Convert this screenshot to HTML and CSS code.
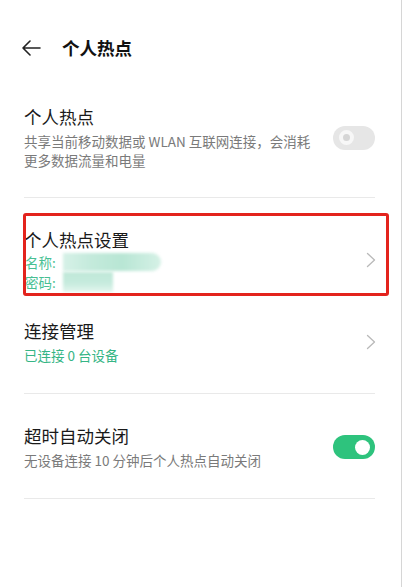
FILE: index.html
```html
<!DOCTYPE html>
<html lang="zh-CN">
<head>
<meta charset="utf-8">
<title>个人热点</title>
<link rel="stylesheet" href="styles.css">
</head>
<body>
<div class="page">
  <header class="header">
    <svg class="back" width="20" height="16" viewBox="0 0 20 16"><path d="M19 8H2M9 1L2 8l7 7" fill="none" stroke="#222" stroke-width="1.6" stroke-linecap="round" stroke-linejoin="round"/></svg>
    <h1 class="header-title">个人热点</h1>
  </header>

  <div class="item item-first">
    <div class="text">
      <div class="title">个人热点</div>
      <div class="sub sub-wrap">共享当前移动数据或 WLAN 互联网连接，会消耗更多数据流量和电量</div>
    </div>
    <div class="switch switch-off"><span class="knob"></span></div>
  </div>
  <div class="divider"></div>

  <div class="item item-settings">
    <div class="text">
      <div class="title">个人热点设置</div>
      <div class="kv">名称:<span class="mask mask-name"></span></div>
      <div class="kv">密码:<span class="mask mask-pw"></span></div>
    </div>
    <svg class="chev" width="10" height="16" viewBox="0 0 10 16"><path d="M1.5 1.5L8.5 8l-7 6.5" fill="none" stroke="#b9b9b9" stroke-width="1.3" stroke-linecap="round" stroke-linejoin="round"/></svg>
    <div class="highlight"></div>
  </div>

  <div class="item item-conn">
    <div class="text">
      <div class="title">连接管理</div>
      <div class="sub green">已连接 0 台设备</div>
    </div>
    <svg class="chev" width="10" height="16" viewBox="0 0 10 16"><path d="M1.5 1.5L8.5 8l-7 6.5" fill="none" stroke="#b9b9b9" stroke-width="1.3" stroke-linecap="round" stroke-linejoin="round"/></svg>
  </div>
  <div class="divider"></div>

  <div class="item">
    <div class="text">
      <div class="title">超时自动关闭</div>
      <div class="sub">无设备连接 10 分钟后个人热点自动关闭</div>
    </div>
    <div class="switch switch-on"><span class="knob"></span></div>
  </div>
  <div class="divider"></div>
</div>
</body>
</html>
```

FILE: styles.css
```css
html, body {
  margin: 0;
  padding: 0;
  background: #fff;
}
body {
  width: 402px;
  height: 587px;
  overflow: hidden;
  font-family: "Noto Sans CJK SC", "Noto Sans", sans-serif;
  color: #1c1c1c;
}
.page {
  width: 401px;
  height: 587px;
  border-right: 1px solid #d6d6d6;
  background: #fff;
}
.header {
  display: flex;
  align-items: center;
  height: 24px;
  padding: 36px 0 15px 21px;
}
.back {
  display: block;
  margin-right: 21px;
}
.header-title {
  margin: 0;
  font-size: 17.5px;
  font-weight: 700;
  line-height: 24px;
  color: #111;
}
.item {
  position: relative;
  display: flex;
  align-items: center;
  padding: 30px 26px 28px 24px;
}
.item-first {
  padding-top: 30px;
  padding-bottom: 27px;
}
.item-settings {
  padding-bottom: 0;
}
.item-conn {
  padding-top: 27px;
}
.text {
  flex: 1;
  min-width: 0;
}
.title {
  font-size: 17.5px;
  line-height: 24px;
  color: #1a1a1a;
}
.sub {
  margin-top: 3px;
  font-size: 13.5px;
  line-height: 19px;
  color: #7a7a7a;
}
.sub-wrap {
  max-width: 292px;
}
.green {
  color: #35b585;
}
.kv {
  display: flex;
  align-items: center;
  font-size: 13.5px;
  line-height: 20px;
  color: #48bf93;
  margin-left: 1px;
}
.kv:first-of-type {
  margin-top: 1px;
}
.mask {
  display: inline-block;
  margin-left: 7px;
  filter: blur(1.5px);
}
.mask-name {
  width: 98px;
  height: 18px;
  border-radius: 0 9px 9px 0;
  background: linear-gradient(90deg, #d6f1e7 0%, #c3eadb 30%, #b8e6d4 60%, #d5f1e6 100%);
}
.mask-pw {
  width: 50px;
  height: 20px;
  background: linear-gradient(180deg, #bfe8d8 0%, #c6ebdd 55%, #e3f6ef 100%);
}
.chev {
  display: block;
  flex: none;
  margin-right: -1px;
}
.highlight {
  position: absolute;
  top: 15px;
  left: 23px;
  right: 12px;
  bottom: -4px;
  border: 3px solid #e3231d;
  border-radius: 3px;
  pointer-events: none;
}
.switch {
  flex: none;
  position: relative;
  width: 42px;
  height: 24px;
  border-radius: 12px;
  margin-left: 10px;
}
.switch-off {
  background: #e6e6e6;
}
.switch-on {
  background: #2ec37d;
}
.knob {
  position: absolute;
  top: 4.5px;
  width: 15px;
  height: 15px;
  border-radius: 50%;
  background: #fff;
  box-sizing: border-box;
}
.switch-off .knob {
  left: 6px;
  border: 4.5px solid #f7f7f7;
  background: #d6d6d6;
}
.switch-on .knob {
  right: 5px;
}
.divider {
  height: 1px;
  background: #e9e9e9;
  margin: 0 26px 0 24px;
}
```
